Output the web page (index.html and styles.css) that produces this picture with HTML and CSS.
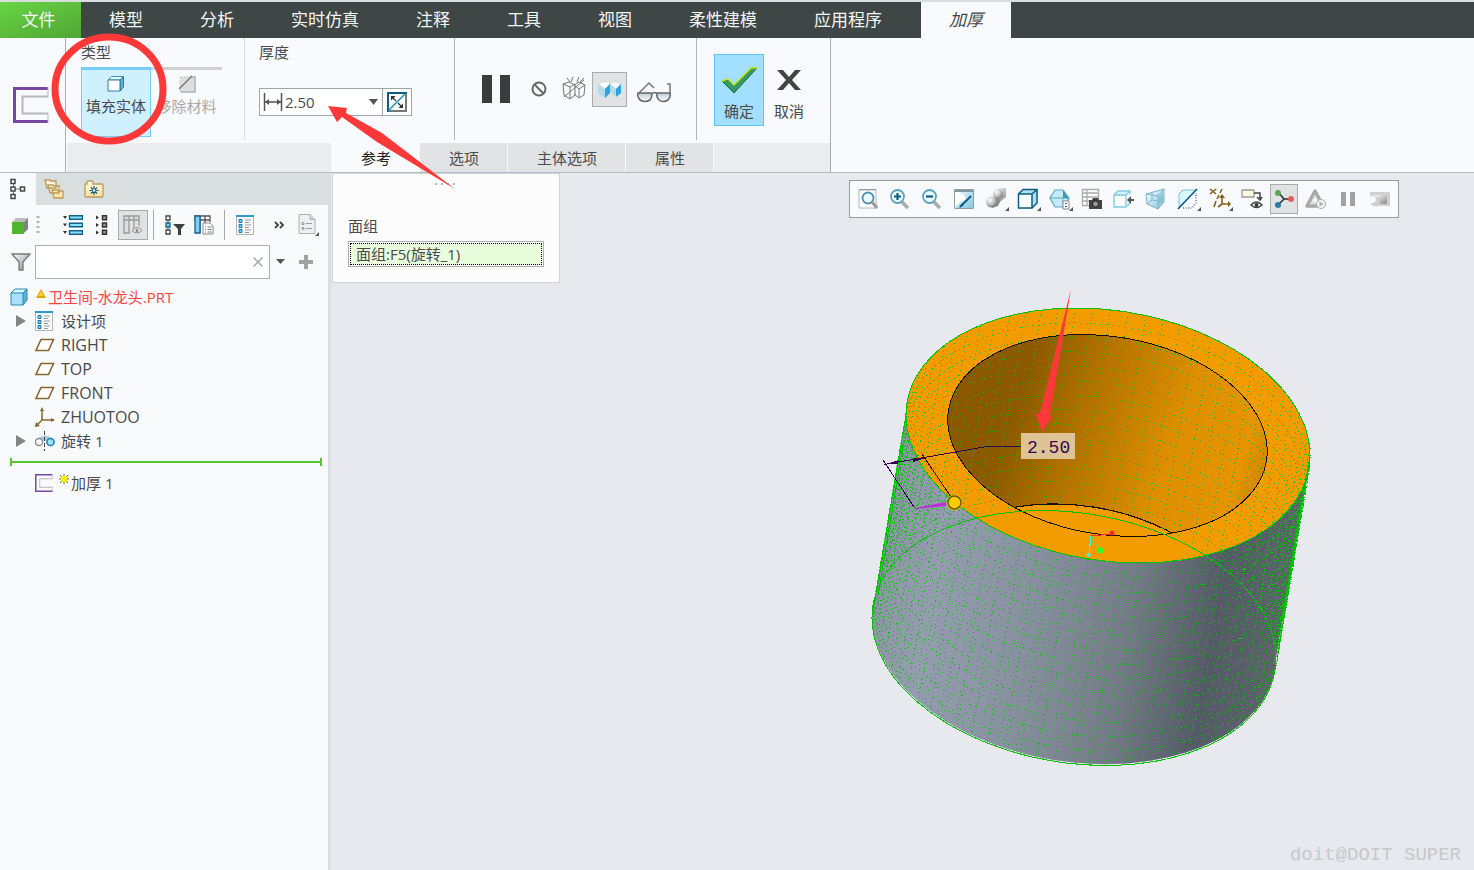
FILE: index.html
```html
<!DOCTYPE html>
<html lang="zh-CN">
<head>
<meta charset="utf-8">
<title>加厚</title>
<link rel="stylesheet" href="styles.css">
</head>
<body>
<svg class="defs" aria-hidden="true">
  <defs>
    <linearGradient id="glass" x1="0" y1="0" x2="1" y2="1"><stop offset="0" stop-color="#fff"/><stop offset="1" stop-color="#7cc4dc"/></linearGradient>
    <linearGradient id="silver" x1="0" y1="0" x2="1" y2="1"><stop offset="0" stop-color="#fff"/><stop offset="1" stop-color="#8a8a8a"/></linearGradient>
    <linearGradient id="manila" x1="0" y1="0" x2="0" y2="1"><stop offset="0" stop-color="#fff8e4"/><stop offset="1" stop-color="#fbe0a0"/></linearGradient>
    <linearGradient id="lens" x1="0" y1="0" x2="0" y2="1"><stop offset="0" stop-color="#b9cdd6"/><stop offset="1" stop-color="#fff"/></linearGradient>
    <radialGradient id="ball" cx=".35" cy=".3" r=".8"><stop offset="0" stop-color="#fff"/><stop offset=".5" stop-color="#c4c4c4"/><stop offset="1" stop-color="#6a6a6a"/></radialGradient>
    <symbol id="cube" viewBox="0 0 18 18">
      <path d="M1 5 5 1h12l-4 4z" fill="#d8f5ff"/><path d="M13 5l4-4v11l-4 5z" fill="#58b4d8"/><path d="M1 5h12v12H1z" fill="#a8e2fa"/><path d="M1 5 5 1h12v11l-4 5H1zM1 5h12v12M13 5l4-4" fill="none" stroke="#2c86ae"/>
    </symbol>
    <symbol id="list" viewBox="0 0 18 20">
      <path d="M.5 1.500h17v18H.5z" fill="#fcfcfc" stroke="#b4b4b4"/><path d="M0 1h18" stroke="#2c9cd0" stroke-width="2"/><path d="M3 4.500h3v3H3zM3 9.500h3v3H3zM3 14.500h3v3H3z" fill="#7cd0f4" stroke="#127cae"/><path d="M9 5h6M9 7.500h4M9 10h6M9 12.500h4M9 15h6M9 17.500h4" stroke="#999"/>
    </symbol>
    <symbol id="plane" viewBox="0 0 20 14"><path d="M6 1.500h12.500l-5 11H1z" fill="#fff" stroke="#866832" stroke-width="1.600"/></symbol>
    <symbol id="page" viewBox="0 0 18 20"><path d="M1 .5h11l5 5v14H1z" fill="#eef0f2" stroke="#a9b0b4"/><path d="M12 .5v5h5" fill="#d0d5d8" stroke="#a9b0b4"/></symbol>
    <symbol id="thicken" viewBox="0 0 36 36"><path d="M35 1.500H1.500v33H35" fill="none" stroke="#7847a4" stroke-width="3"/><path d="M35 9.500H9.500v17H35" fill="none" stroke="#b8b8ba" stroke-width="2"/><path d="M35 0v10M35 26v10" stroke="#b8b8ba" stroke-width="1"/></symbol>
  </defs>
</svg>

<nav class="menubar">
  <button class="menu file">文件</button>
  <div class="menus">
    <button class="menu">模型</button>
    <button class="menu">分析</button>
    <button class="menu">实时仿真</button>
    <button class="menu">注释</button>
    <button class="menu">工具</button>
    <button class="menu">视图</button>
    <button class="menu">柔性建模</button>
    <button class="menu">应用程序</button>
    <button class="menu current">加厚</button>
  </div>
</nav>

<header class="ribbon">
  <div class="feature"><svg width="36" height="36"><use href="#thicken"/></svg></div>
  <div class="dash">
    <div class="groups">
      <section class="group type">
        <h2>类型</h2>
        <div class="types">
          <button class="kind on">
            <svg width="18" height="18"><path d="M1 5 4.500 1.500h12L13 5z" fill="#e6f8fc" stroke="#3b93b5"/><path d="M13 5l3.500-3.500V12L13 16z" fill="#58b4d4" stroke="#2c7c9c"/><path d="M1 5h12v11H1z" fill="#fff" stroke="#2c7c9c"/></svg>
            <span>填充实体</span>
          </button>
          <button class="kind" disabled>
            <svg width="18" height="18"><path d="M2 2h15v15H2z" fill="#dedede" stroke="#c2c2c2" stroke-dasharray="1 1"/><path d="M14 2h3v15H3" fill="none" stroke="#b4b4b4" stroke-width="1.500"/><path d="M1 14 14 1" stroke="#777" stroke-width="1.500"/></svg>
            <span>移除材料</span>
          </button>
        </div>
      </section>
      <section class="group thickness">
        <h2><label for="thick">厚度</label></h2>
        <div class="combo">
          <svg width="20" height="20"><path d="M1.500 1v18M18.500 1v18M2 10h16" stroke="#555" stroke-width="1.500"/><path d="M2 10l4-3v6zM18 10l-4-3v6z" fill="#555"/></svg>
          <input id="thick" type="text" value="2.50">
          <button class="drop" aria-label="最近值"><svg width="9" height="6"><path d="M0 0h9L4.500 6z" fill="#555"/></svg></button>
          <button class="flip" aria-label="反向"><svg width="20" height="20"><path d="M1 1h18v18H1z" fill="#fafafa"/><path d="M19 1v18H1" fill="none" stroke="#777" stroke-width="2"/><path d="M1 20V1h19" fill="none" stroke="#0d5c80" stroke-width="2"/><path d="M1 19 19 1" stroke="#1788b4" stroke-width="1.300"/><path d="M4 4h4.500L4 8.500zM16 16v-4.500L11.500 16z" fill="#333"/><path d="M5 5l4 4M15 15l-4-4" stroke="#333" stroke-width="1.200"/></svg></button>
        </div>
      </section>
      <section class="group preview">
        <button class="icon" aria-label="暂停"><svg width="28" height="28"><path d="M0 0h10v28H0zM18 0h10v28H18z" fill="#3c3c3c"/></svg></button>
        <button class="icon" aria-label="无预览"><svg width="16" height="16"><circle cx="8" cy="8" r="6.500" fill="none" stroke="#666" stroke-width="2"/><path d="M3.500 3.500l9 9" stroke="#666" stroke-width="2"/></svg></button>
        <button class="icon" aria-label="分离"><svg width="25" height="24"><path d="M1 7l6-2 6 3v10l-5 4-6-4zM1 7l7 3 5-3M8 10v12M12 8l5-3 6 3-1 10-5 3-5-4M12 8l5 4 6-4M17 12v9M5 1l3 4M11 0l-2 5M17 0l-2 5M22 1l-4 4M2 20 22 3" fill="none" stroke="#777"/></svg></button>
        <button class="icon boxed" aria-label="连接"><svg width="25" height="19"><path d="M1 4l5-2h6l1 2-5 5zM13 4l3-2h5l3 2-5 5z" fill="#fff" stroke="#bcc4c8" stroke-width=".5"/><path d="M1 4l7 5v9l-7-5zM13 4l6 5v8l-6-5z" fill="#b0dcea"/><path d="M8 9l5-5v9l-5 5zM19 9l5-5v9l-5 4z" fill="#28a4e4"/></svg></button>
        <button class="icon" aria-label="验证"><svg width="34" height="22"><path d="M2 12 12 2l5 5M33 13V3h-3" fill="none" stroke="#777" stroke-width="1.500"/><path d="M1 12h13q2 3-1 7-5 3-10 0-3-3-2-7zM20 12h13q1 4-2 7-5 3-9 0-3-3-2-7z" fill="url(#lens)" stroke="#666" stroke-width="1.500"/><path d="M15 13q2-3 5 0" fill="none" stroke="#666" stroke-width="1.500"/></svg></button>
      </section>
      <section class="group finish">
        <button class="act ok"><svg width="36" height="26"><path d="M1 14l6-1 6 5L30 1h6L13 26z" fill="#339a62" stroke="#20693c"/><path d="M1 14l6-2 6 6L30 1h6" fill="none" stroke="#c8e61a" stroke-width="1.500"/></svg><span>确定</span></button>
        <button class="act"><svg width="26" height="26"><path d="M1 3h6l6 7 6-7h6l-9 10 9 10h-6l-6-7-6 7H1l9-10z" fill="#444"/></svg><span>取消</span></button>
      </section>
    </div>
    <div class="strip">
      <span class="lead"></span>
      <button class="tab current">参考</button>
      <button class="tab">选项</button>
      <button class="tab">主体选项</button>
      <button class="tab">属性</button>
      <span class="rest"></span>
    </div>
  </div>
</header>

<div class="work">
  <aside class="side">
    <div class="sidetabs">
      <button class="sidetab current" aria-label="模型树"><svg width="16" height="22"><path d="M3.500 3v16M4 11h8" stroke="#777"/><path d="M1 1.500h4v4H1zM1 9h4v4H1zM1 16.500h4v4H1zM10.500 9h4v4h-4z" fill="#fff" stroke="#444" stroke-width="1.500"/></svg></button>
      <button class="sidetab" aria-label="文件夹浏览器"><svg width="20" height="20"><path d="M1 1h5l1 1h5v7H3zM4 6h5l1 1h5v7H6zM8 11h5l1 1h5v7H10z" fill="url(#manila)" stroke="#bd9a5e" stroke-width="1.300"/></svg></button>
      <button class="sidetab" aria-label="收藏夹"><svg width="20" height="18"><path d="M1 4h2V2q0-1 1-1h4q1 0 1 3h9q1 0 1 1v11q0 1-1 1H2q-1 0-1-1z" fill="url(#manila)" stroke="#bd9a5e" stroke-width="1.300"/><path d="M10 6v9M5.500 10.500h9M7 7.500l6 6M13 7.500l-6 6" stroke="#0d5c80" stroke-width="1.200"/><circle cx="10" cy="10.500" r="1.200" fill="#fff"/></svg></button>
    </div>
    <div class="tools">
      <button class="tool" aria-label="模型"><svg width="16" height="18"><path d="M0 6l4-4h12l-4 4z" fill="#bdbdbd"/><path d="M12 6l4-4v11l-4 4z" fill="#808080"/><path d="M0 6h12v12H0z" fill="#51b52e"/></svg></button>
      <svg class="grip" width="4" height="20"><path d="M2 1v18" stroke="#b4b4b4" stroke-width="3" stroke-dasharray="2 3"/></svg>
      <button class="tool expand" aria-label="全部展开"><svg width="20" height="20"><path d="M0 1h4L2 4zM0 8.500h4l-2 3zM0 16h4l-2 3z" fill="#333"/><path d="M6.500.7h13v3.600h-13zM6.500 8.200h13v3.600h-13zM6.500 15.700h13v3.600h-13z" fill="#8ce0fc" stroke="#12628a" stroke-width="1.400"/></svg></button>
      <button class="tool collapse" aria-label="全部折叠"><svg width="12" height="20"><path d="M0 .5v4L3 2.500zM0 8v4l3-2zM0 15.500v4l3-2z" fill="#333"/><path d="M6.500.8h4v4h-4zM6.500 8h4v4h-4zM6.500 15.200h4v4h-4z" fill="#999" stroke="#333" stroke-width="1.500"/></svg></button>
      <button class="tool boxed" aria-label="树列"><svg width="20" height="20"><path d="M1 1h15v4H1zM1 5h5v13H1zM6 1v17M11 1v14M16 1v10" fill="#ddd" stroke="#999" stroke-width="1.300"/><path d="M9 15.500q5-6 10 0-5 5-10 0z" fill="#eee" stroke="#888"/><circle cx="14" cy="15.500" r="1.500" fill="#888"/></svg></button>
      <i class="rule"></i>
      <button class="tool filter" aria-label="树过滤器"><svg width="20" height="20"><path d="M3 2v16" stroke="#555"/><path d="M1 1h4v4H1zM1 15h4v4H1z" fill="#fff" stroke="#444" stroke-width="1.300"/><path d="M1 8h4v4H1z" fill="#7cd0f4" stroke="#12628a" stroke-width="1.300"/><path d="M8 9h12l-4 5v6h-3v-6z" fill="#3f3f3f"/></svg></button>
      <button class="tool columns" aria-label="列设置"><svg width="20" height="20"><path d="M1 1h15v4H1zM11 1v10M6 1v17M16 1v6" fill="#fff" stroke="#555" stroke-width="1.300"/><path d="M1 1h5v17H1z" fill="#7cd0f4" stroke="#12628a" stroke-width="1.300"/><path d="M9 8h7l3 3v8H9z" fill="#fff" stroke="#888"/><path d="M11 12h1M13.500 12h4M11 14.500h1M13.500 14.500h4M11 17h1M13.500 17h4" stroke="#777"/></svg></button>
      <i class="rule"></i>
      <button class="tool design" aria-label="设计项"><svg width="18" height="20"><use href="#list"/></svg></button>
      <button class="tool more" aria-label="更多"><svg width="11" height="8"><path d="M1 1l3 3-3 3M6 1l3 3-3 3" fill="none" stroke="#444" stroke-width="1.800"/></svg></button>
      <button class="tool sheet" aria-label="显示"><svg width="21" height="22"><use href="#page" width="18" height="20"/><path d="M4 8.500h2v2H4zM4 13.500h2v2H4z" fill="none" stroke="#999"/><path d="M8 9.500h6M8 14.500h6" stroke="#999"/><path d="M21 18v4h-4z" fill="#555"/></svg></button>
    </div>
    <div class="search">
      <svg width="20" height="18"><path d="M1 1h18l-7 8v8H8V9z" fill="url(#silver)" stroke="#777" stroke-width="1.300"/></svg>
      <div class="field">
        <input type="text" aria-label="搜索模型树">
        <button aria-label="清除"><svg width="10" height="10"><path d="M.5.500l9 9M9.500.5l-9 9" stroke="#a6a6a6" stroke-width="1.500"/></svg></button>
      </div>
      <button aria-label="搜索选项"><svg width="9" height="6"><path d="M0 0h9L4.500 5z" fill="#555"/></svg></button>
      <button aria-label="添加"><svg width="14" height="14"><path d="M5 0h4v5h5v4H9v5H5V9H0V5h5z" fill="#a2a2a2"/></svg></button>
    </div>
    <ul class="tree">
      <li class="root"><svg width="18" height="18"><use href="#cube"/></svg><svg class="warn" width="10" height="9"><path d="M5 0 10 9H0z" fill="#e4a400"/><path d="M5 2l2.500 5h-5z" fill="#ffd23c"/></svg><span>卫生间-水龙头.PRT</span></li>
      <li><button class="twist" aria-label="展开"></button><svg width="20" height="20"><use href="#list" width="18" height="20"/></svg><span>设计项</span></li>
      <li><i class="twist"></i><svg width="20" height="14"><use href="#plane"/></svg><span class="latin">RIGHT</span></li>
      <li><i class="twist"></i><svg width="20" height="14"><use href="#plane"/></svg><span class="latin">TOP</span></li>
      <li><i class="twist"></i><svg width="20" height="14"><use href="#plane"/></svg><span class="latin">FRONT</span></li>
      <li><i class="twist"></i><svg width="20" height="20"><path d="M7 2v11h12M7 13l-6 6" fill="none" stroke="#866832" stroke-width="1.500"/><path d="M7 0l2 4H5zM20 13l-4-2v4zM0 20l1-5 4 4z" fill="#866832"/></svg><span class="latin">ZHUOTOO</span></li>
      <li><button class="twist" aria-label="展开"></button><svg width="20" height="20"><path d="M2 8q8-7 16 0l-3 3q-5-3-10 0z" fill="#a6cfe0"/><circle cx="4" cy="11" r="3.500" fill="#fff" stroke="#888" stroke-width="1.300"/><circle cx="15.500" cy="11" r="3.600" fill="#9ee4ff" stroke="#1580ae" stroke-width="1.500"/><path d="M9.500 0v20" stroke="#444" stroke-dasharray="4 2"/></svg><span>旋转 1</span></li>
      <li class="insert"></li>
      <li><i class="twist"></i><svg width="20" height="18"><use href="#thicken" width="18" height="18"/></svg><svg class="fresh" width="10" height="10"><path d="M5 0v10M0 5h10M1 1l8 8M9 1 1 9" stroke="#555"/><circle cx="5" cy="5" r="3.400" fill="#f8f000"/></svg><span>加厚 1</span></li>
    </ul>
  </aside>

  <main class="view">
    <section class="panel">
      <svg width="22" height="4"><path d="M0 2h22" stroke="#b4b8ba" stroke-width="2" stroke-dasharray="2 4"/></svg>
      <label for="quilt">面组</label>
      <div class="collector"><input id="quilt" type="text" value="面组:F5(旋转_1)" readonly></div>
    </section>

    <div class="viewbar">
      <button aria-label="重新调整"><svg width="22" height="22"><path d="M2 2h17v18H2z" fill="#fff" stroke="#b4b4b4"/><path d="M2 1.500h17" stroke="#999"/><circle cx="11" cy="10" r="5.500" fill="#ecfaff" stroke="#4690b0" stroke-width="1.800"/><path d="M15 14l5 6" stroke="#999" stroke-width="3"/></svg></button>
      <button aria-label="放大"><svg width="22" height="22"><path d="M13 14l6 6" stroke="#aaa" stroke-width="3.500"/><circle cx="8.500" cy="8.500" r="6.500" fill="#ecfaff" stroke="#5ba0be" stroke-width="1.800"/><path d="M8.500 5v7M5 8.500h7" stroke="#0d5c80" stroke-width="2.200"/></svg></button>
      <button aria-label="缩小"><svg width="22" height="22"><path d="M13 14l6 6" stroke="#aaa" stroke-width="3.500"/><circle cx="8.500" cy="8.500" r="6.500" fill="#ecfaff" stroke="#5ba0be" stroke-width="1.800"/><path d="M5 8.500h7" stroke="#0d5c80" stroke-width="2.200"/></svg></button>
      <button aria-label="重画"><svg width="22" height="22"><path d="M1.500 1.500h19v19h-19z" fill="url(#glass)" stroke="#999"/><path d="M2 4q8 0 11 7-8 4-11 8z" fill="#fff"/><path d="M2 2h18v2H2z" fill="#7a9aa4"/><path d="M7 19l11-11" stroke="#0d5c80" stroke-width="1.800"/><path d="M6 20l3-5 2 2z" fill="#0d5c80"/></svg></button>
      <button class="has-menu" aria-label="渲染"><svg width="22" height="22"><path d="M10 3l4-3h7v9l-5 4-6-2z" fill="url(#silver)"/><circle cx="13" cy="6" r="5" fill="url(#ball)"/><path d="M8 9l8 3-3 6-6 2z" fill="#8c8c8c"/><circle cx="6.500" cy="14" r="5.500" fill="url(#ball)"/></svg></button>
      <button class="has-menu" aria-label="显示样式"><svg width="22" height="22"><path d="M1.500 6 6 1.500h14V15l-5 5.500H1.500z" fill="#a8e2f4"/><path d="M1.500 6H15v14H1.500z" fill="#fff"/><path d="M1.500 6 6 1.500h14V15l-5 5H1.500zM1.500 6H15v14M15 6l5-4.500" fill="none" stroke="#0d5c80" stroke-width="1.500"/></svg></button>
      <button class="has-menu" aria-label="已保存方向"><svg width="22" height="22"><path d="M6 2h8l6 8-4 9H6l-5-9z" fill="#c4ecf8" stroke="#5aa8c4" stroke-width="1.200"/><path d="M14 2l6 9-6-1z" fill="#3c94b8"/><path d="M1 10h13v9" fill="none" stroke="#5aa8c4"/><path d="M14 13h6v8h-6z" fill="#fff" stroke="#888"/><path d="M16 15.500h2M16 18.500h2" stroke="#555"/></svg></button>
      <button aria-label="视图管理器"><svg width="22" height="22"><path d="M1.500 1.500h16v16h-16zM1.500 5h16M1.500 9h16M1.500 13h16M6 1.500v16" fill="#fff" stroke="#aaa" stroke-width="1.300"/><path d="M8 12h3l1-2h5l1 2h3v9H8z" fill="#444"/><circle cx="14.500" cy="16" r="3" fill="#999" stroke="#222"/></svg></button>
      <button aria-label="外观"><svg width="22" height="22"><path d="M1 7l4-4h12l-4 4v11l-1 1H1z" fill="#d4f2fc"/><path d="M1 7l4-4h12v3M13 7l4-4M13 7v12M1 7h12v12H1zM14 18l3-3" fill="none" stroke="#84cce4" stroke-width="1.300"/><path d="M2 8h10v10H2z" fill="#fff"/><path d="M14 12l4-4v3h3v2h-3v3z" fill="#555"/></svg></button>
      <button aria-label="透视图"><svg width="22" height="22"><path d="M1 6 19 1v13l-6 7-11-5z" fill="url(#glass)" stroke="#7cb4cc"/><path d="M1 6l12 2 6-7M13 8v13M2 16l5-4 12 2M7 5v7" fill="none" stroke="#7cb4cc"/><path d="M14 9l4-5v9l-4 5z" fill="#88c4d8"/></svg></button>
      <button class="has-menu" aria-label="截面"><svg width="22" height="22"><path d="M2 6l4-4h13L2 19z" fill="#dcf4fc" stroke="#7cc4dc"/><path d="M6 20h9l4-5V5" fill="none" stroke="#999" stroke-dasharray="1 1.500" stroke-width="2"/><path d="M1 21 20 1" stroke="#0d5c80" stroke-width="1.600"/></svg></button>
      <button class="has-menu" aria-label="基准显示"><svg width="22" height="22"><path d="M1 1l6 5M7 1 1 6M13 1l-2 4M10 7l-2 4M7 13l-2 6M13 8v8h7M13 16l-4 3" fill="none" stroke="#866018" stroke-width="1.600"/><path d="M19 13v6l3-3zM10 10l3-4 3 4z" fill="#866018"/></svg></button>
      <button aria-label="注释显示"><svg width="22" height="22"><path d="M1 2h12v7H1z" fill="#fff8dc" stroke="#999" stroke-width="1.300"/><path d="M13 5h6v7M16 9l3 3 2-3" fill="none" stroke="#444" stroke-width="1.500"/><path d="M10 17q5.500-6 11 0-5.500 5-11 0z" fill="#fff" stroke="#444" stroke-width="1.500"/><circle cx="15.500" cy="17" r="2" fill="#333"/></svg></button>
      <button class="boxed" aria-label="旋转中心"><svg width="22" height="22"><path d="M5 4l6 7 7 0M11 11l-6 6" fill="none" stroke="#333" stroke-width="1.600"/><circle cx="5" cy="5" r="3" fill="#58a850"/><circle cx="5" cy="17" r="3" fill="#2c7ca4"/><circle cx="18" cy="11" r="3" fill="#e45c5c"/></svg></button>
      <button aria-label="动态"><svg width="22" height="22"><path d="M10 3 2 18h16z" fill="none" stroke="#a8a8a8" stroke-width="3.500" stroke-linejoin="round"/><path d="M10 7 6 15h8z" fill="#f8fafd" stroke="#ccc"/><circle cx="16" cy="16" r="4.500" fill="#f4f4f4" stroke="#aaa"/><path d="M14.500 13.500v5l4-2.500z" fill="#aaa"/></svg></button>
      <button aria-label="暂停模拟"><svg width="22" height="22"><path d="M4 4h5v14H4zM13 4h5v14h-5z" fill="#a2a2a2"/></svg></button>
      <button aria-label="结果"><svg width="22" height="22"><path d="M1 4h20v14H10q-6 1-9-2 6-1 6-5 0-3-6-3z" fill="#d0d0d0"/><path d="M4 7h14v9h-8q3-5-6-9z" fill="url(#silver)"/></svg></button>
    </div>

    <svg class="model" width="460" height="490" viewBox="860 285 460 490">
      <defs>
        <linearGradient id="skin" gradientUnits="userSpaceOnUse" x1="880" y1="530" x2="1290" y2="599">
          <stop offset="0" stop-color="#8b96a3"/><stop offset=".15" stop-color="#949dae"/><stop offset=".4" stop-color="#86909d"/><stop offset=".62" stop-color="#747c87"/><stop offset=".83" stop-color="#555b66"/><stop offset="1" stop-color="#5c616c"/>
        </linearGradient>
        <linearGradient id="bore" gradientUnits="userSpaceOnUse" x1="950" y1="410" x2="1267" y2="463">
          <stop offset="0" stop-color="#8a5800"/><stop offset=".2" stop-color="#8c5a00"/><stop offset=".42" stop-color="#b57400"/><stop offset=".7" stop-color="#dd8f00"/><stop offset=".92" stop-color="#e69500"/><stop offset="1" stop-color="#d08600"/>
        </linearGradient>
        <clipPath id="mouth"><ellipse cx="1107.500" cy="435.500" rx="161" ry="99" transform="rotate(9.100 1107.500 435.500)"/></clipPath>
      </defs>
      <path d="M906 415 872 617A203.600 124.900 9.100 0 0 1276 658L1310 456z" fill="url(#skin)"/>
      <g shape-rendering="crispEdges">
        <ellipse cx="1108" cy="435.500" rx="203.600" ry="124.900" transform="rotate(9.100 1108 435.500)" fill="#f29c00"/>
        <ellipse cx="1107.500" cy="435.500" rx="161" ry="99" transform="rotate(9.100 1107.500 435.500)" fill="url(#bore)"/>
        <g clip-path="url(#mouth)"><ellipse cx="1079" cy="605" rx="161" ry="99" transform="rotate(9.100 1079 605)" fill="#f29c00" stroke="#111" stroke-width="1.200"/></g>
        <path id="mesh" fill="#00c000"/>
        <ellipse cx="1107.500" cy="435.500" rx="161" ry="99" transform="rotate(9.100 1107.500 435.500)" fill="none" stroke="#111"/>
        <g fill="none" stroke="#00c400">
          <ellipse cx="1074" cy="638" rx="203.600" ry="124.900" transform="rotate(9.100 1074 638)"/>
          <ellipse cx="1108" cy="435.500" rx="203.600" ry="124.900" transform="rotate(9.100 1108 435.500)"/>
          <path d="M906 415 872 617M1310 456l-33 204M903 445l-25 150M1306 478l-26 155"/>
        </g>
        <path d="M1022 446.500h-35l-103 18M883 460l31 47M922 454l31 46" fill="none" stroke="#30004c"/>
        <path d="M886 464l12-4v4zM928 457l-15 1v4z" fill="#30004c"/>
        <path d="M1091 536l-2 18" stroke="#30f4ff" stroke-width="1.200"/><path d="M1091 536l21-2" stroke="#ff2c2c"/><path d="M1091 536l9 14" stroke="#2cff2c"/>
      </g>
      <path d="M915 508l31-6v4l-31 3z" fill="#c02cd8"/>
      <circle cx="1088.500" cy="555" r="2" fill="#30f4ff"/><circle cx="1112" cy="533" r="2.500" fill="#fc2c2c"/><circle cx="1100.500" cy="550.500" r="3" fill="#2cff2c"/>
      <circle cx="954.500" cy="502.500" r="8" fill="#f8c000"/><circle cx="954.500" cy="502.500" r="6.500" fill="#ffcc00" stroke="#6c5800" stroke-width="1.500"/>
      <rect x="1021" y="433" width="54" height="26" fill="#dec494"/>
      <text class="dim" x="1027" y="453">2.50</text>
      <path d="M1071 289l-21 126 2 2-10 15-6-18 4-1z" fill="#fc3838"/>
    </svg>

    <p class="stamp">doit@DOIT SUPER</p>
  </main>
</div>

<svg class="marks" width="470" height="200" aria-hidden="true">
  <ellipse cx="109" cy="89" rx="54" ry="52" fill="none" stroke="#fc3838" stroke-width="7"/>
  <path d="M328 106l19 2-1 5 36 20 73 56-78-47-35-25-5 5z" fill="#fc3838"/>
</svg>
<script src="mesh.js"></script>
</body>
</html>
```
FILE: styles.css
```css
* { box-sizing: border-box; }
body {
  margin: 0;
  min-height: 100vh;
  display: flex;
  flex-direction: column;
  border-top: 2px solid #d9dfdf;
  background: #f8fafd;
  color: #4a4a4a;
  font: 15px/20px "Open Sans", "Noto Sans CJK SC", sans-serif;
  position: relative;
}
button, input { font: inherit; color: inherit; }
button { border: 0; padding: 0; background: none; }
input { border: 0; padding: 0; min-width: 0; background: none; outline: 0; }
svg { display: block; flex: none; }
h2, p, ul { margin: 0; padding: 0; font-weight: 400; font-size: 15px; }
.defs { position: absolute; width: 0; height: 0; }

.menubar { display: flex; height: 36px; background: #3e4646; }
.menus { display: flex; gap: 1px; }
.menu { padding: 0 28px; color: #f4f6f6; font-size: 17px; white-space: nowrap; }
.menu.file { width: 81px; padding: 0 4px 0 0; background: linear-gradient(160deg, #68d444, #50a634); }
.menu.current { margin-left: 10px; background: #f8fafd; color: #444; font-style: italic; }

.ribbon { display: flex; height: 135px; border-bottom: 1px solid #b0bfc0; background: #f8fafd; }
.feature { width: 66px; padding: 49px 0 0 13px; border-right: 1px solid #a9aeb0; }
.dash { display: flex; flex-direction: column; justify-content: space-between; border-right: 1px solid #a9aeb0; padding: 0 0 0 1px; }
.groups { display: flex; height: 102px; }
.group { border-right: 1px solid #b4b8ba; }
.group h2 { height: 29px; padding-top: 4px; }
.type { width: 178px; padding-left: 14px; border-color: #dcdee0; }
.types { display: flex; }
.kind { width: 70px; height: 70px; display: flex; flex-direction: column; align-items: center; border-top: 3px solid #d2d2d2; white-space: nowrap; }
.kind svg { margin: 5px 0 3px; }
.kind:disabled { color: #a9a9a9; width: 71px; }
.kind.on { border: 1px solid #78cdf6; border-top-width: 3px; background: #cff0ff; }
.thickness { width: 210px; padding-left: 14px; }
.combo { display: flex; align-items: center; width: 153px; height: 28px; margin-top: 21px; border: 1px solid #a2a5a7; background: #fff; padding-left: 3px; }
.combo input { flex: 1; padding-left: 2px; }
.drop { width: 18px; display: grid; place-items: center; }
.flip { width: 29px; align-self: stretch; display: grid; place-items: center; border-left: 1px solid #a2a5a7; }
.preview { width: 242px; display: flex; align-items: center; padding: 0 0 0 27px; }
.icon { display: grid; place-items: center; }
.icon:nth-child(2) { margin-left: 21px; }
.icon:nth-child(3) { margin-left: 15px; }
.icon:nth-child(4) { margin-left: 5px; width: 35px; height: 35px; }
.icon:nth-child(5) { margin-left: 10px; padding-top: 5px; }
.boxed { border: 1px solid #a8aaac; background: #e0e2e3; }
.finish { flex: 1; width: 133px; padding: 16px 0 0 17px; display: flex; border: 0; }
.act { width: 50px; height: 72px; display: flex; flex-direction: column; align-items: center; gap: 8px; padding-top: 13px; }
.act.ok { border: 1px solid #5cc2fa; background: #a3dfff; padding-top: 12px; }

.strip { display: flex; height: 29px; }
.lead { width: 264px; background: #ebeced; }
.rest { flex: 1; background: #ebeced; border-left: 1px solid #f8fafd; }
.tab { padding: 0 28px 0 29px; border-left: 1px solid #f8fafd; background: #e1e3e4; white-space: nowrap; }
.tab.current { background: #f8fafd; color: #222; }

.work { flex: 1; display: flex; }
.side { width: 331px; flex: none; border-right: 3px solid #dadee0; background: #f8fafc; }
.sidetabs { display: flex; height: 32px; margin-right: -3px; background: #d9dfdf; }
.sidetab { width: 36px; display: grid; place-items: center; }
.sidetab:nth-child(3) { margin-left: 4px; }
.sidetab.current { background: #f8fafd; }
.tools { display: flex; align-items: center; height: 40px; padding-left: 12px; }
.tool { display: grid; place-items: center; }
.tools .grip { margin-left: 8px; }
.tools .expand { margin-left: 23px; }
.tools .collapse { margin-left: 13px; }
.tools .boxed { width: 30px; height: 30px; margin-left: 10px; }
.rule { width: 1px; height: 30px; margin-left: 5px; background: #a6aaac; }
.tools .filter { margin-left: 11px; }
.tools .columns { margin-left: 9px; }
.tools .columns + .rule { margin-left: 10px; }
.tools .design { margin-left: 11px; }
.tools .more { margin-left: 20px; }
.tools .sheet { margin-left: 13px; }
.search { display: flex; align-items: center; padding-left: 11px; }
.field { display: flex; align-items: center; width: 235px; height: 34px; margin: 0 6px 0 4px; border: 1px solid #a9b0b2; background: #fff; padding-right: 6px; }
.field input { flex: 1; }
.search > button + button { margin-left: 14px; }
.tree { list-style: none; padding: 6px 6px 0 10px; }
.tree li { display: flex; align-items: center; height: 24px; white-space: nowrap; }
.tree .root { color: #f84444; }
.root .warn { margin: 0 2px 8px 8px; }
.twist { width: 10px; height: 12px; margin: 0 9px 0 6px; flex: none; }
button.twist { background: #858585; clip-path: polygon(0 0, 100% 50%, 0 100%); }
.tree span { margin-left: 6px; }
.tree .root span { margin-left: 0; }
.tree .latin { font-size: 16px; }
.tree .fresh { margin: 0 2px 8px 4px; }
.tree .fresh + span { margin-left: 0; }
.tree .insert { height: 8px; margin: 5px 0; border: solid #58c434; border-width: 0 2px; background: linear-gradient(#58c434, #58c434) center / 100% 2px no-repeat; }

.view { flex: 1; position: relative; overflow: hidden; background: #e8e9ee; }
.panel { width: 228px; height: 110px; margin-left: 1px; padding: 8px 15px; display: flex; flex-direction: column; border: 1px solid #d0d5d7; background: #fcfcfc; }
.panel svg { align-self: center; margin-bottom: 30px; }
.collector { margin-top: 5px; padding: 1px; border: 1px solid #abb0b4; background: #fff; }
.collector input { display: block; width: 100%; height: 22px; padding: 0 0 2px 5px; border: 1px dotted #000; background: #e9fcdc; }
.viewbar { position: absolute; top: 7px; right: 75px; height: 38px; padding: 0 2px; display: flex; align-items: center; border: 1px solid #989c9f; background: #f8fafd; }
.viewbar button { position: relative; width: 32px; height: 30px; display: grid; place-items: center; }
.viewbar .boxed { width: 28px; margin: 0 2px; }
.viewbar .has-menu::after { content: ""; position: absolute; right: 3px; bottom: 3px; width: 4px; height: 4px; background: #555; clip-path: polygon(100% 0, 100% 100%, 0 100%); }
.model { position: absolute; top: 112px; right: 154px; }
.dim { font: 18px "Liberation Mono", monospace; fill: #380858; }
.stamp { position: absolute; right: 13px; bottom: 4px; font: 19px/22px "Liberation Mono", monospace; color: #c6c8ca; }
.marks { position: absolute; top: -2px; left: 0; pointer-events: none; }
```
FILE: mesh.js
```js
// Dotted isoparametric curves of the cylinder walls.
const center = [1108, 435.5];
const axis = [-34, 202];
const major = [201, 32.2];
const minor = [-19.8, 123.3];
const dots = new Set();

function insideRim(x, y) {
  const a = 9.1 * Math.PI / 180;
  const dx = x - center[0];
  const dy = y - center[1];
  const u = (dx * Math.cos(a) + dy * Math.sin(a)) / 203.6;
  const v = (dy * Math.cos(a) - dx * Math.sin(a)) / 124.9;
  return u * u + v * v < 1;
}

function plot(t, s, hideInRim) {
  const c = Math.cos(t);
  const n = Math.sin(t);
  const x = Math.round(center[0] + axis[0] * s + major[0] * c + minor[0] * n);
  const y = Math.round(center[1] + axis[1] * s + major[1] * c + minor[1] * n);
  if (!(hideInRim && insideRim(x, y))) dots.add(`M${x} ${y}h1v1h-1z`);
}

for (let row = 1; row < 14; row++) {
  for (let i = 0; i < 200; i++) plot(i * Math.PI / 100, row / 14, false);
}
for (let col = 0; col < 72; col++) {
  for (let i = 0; i < 42; i++) plot(col * Math.PI / 36, i / 42, false);
}

// Facets seen only through the outer skin, scattered by golden-ratio steps.
for (let i = 0; i < 4200; i++) {
  const t = i * 2.399963;
  plot(t, (i * 0.754878) % 1, true);
}
document.getElementById('mesh').setAttribute('d', [...dots].join(''));
```
